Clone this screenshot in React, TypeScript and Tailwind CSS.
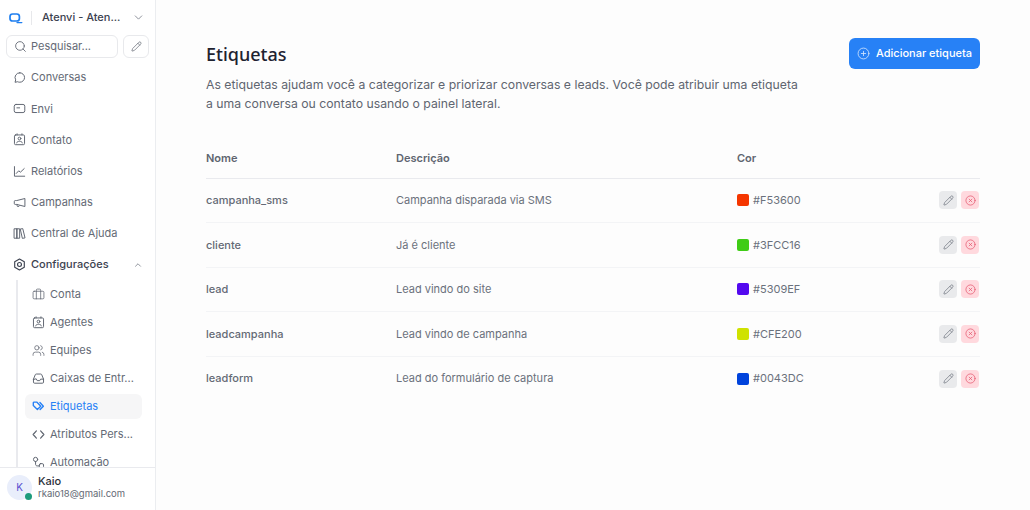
import {
  Briefcase,
  ChevronDown,
  ChevronUp,
  CircleX,
  Pencil,
  PlusCircle,
  Search,
  Users,
} from "lucide-react";
import type { ReactNode } from "react";

// outline icons drawn on a 16 box, same stroke for all of them
function Glyph({ children, size = 13, className = "", width = 1.2 }: { children: ReactNode; size?: number; className?: string; width?: number }) {
  return (
    <svg width={size} height={size} viewBox="0 0 16 16" fill="none" stroke="currentColor" strokeWidth={width} strokeLinecap="round" strokeLinejoin="round" className={`shrink-0 ${className}`}>
      {children}
    </svg>
  );
}

const ChatIcon = ({ className }: { className?: string }) => (
  <Glyph className={className}>
    <path d="M8.4 2.2a5.8 5.8 0 0 1 0 11.6c-1 0-1.9-.2-2.7-.6l-3.2.7.8-3a5.8 5.8 0 0 1 5.1-8.7Z" />
  </Glyph>
);
const EnviIcon = ({ className }: { className?: string }) => (
  <Glyph className={className}>
    <rect x="1.5" y="3" width="13" height="10" rx="2.2" />
    <path d="M4.8 7.2h3.4" />
  </Glyph>
);
const ContactIcon = ({ className }: { className?: string }) => (
  <Glyph className={className}>
    <rect x="1.800" y="2.400" width="12.400" height="12" rx="1.400" />
    <path d="M5 1v1.400M11 1v1.400" />
    <circle cx="8" cy="6.800" r="1.700" />
    <path d="M4.400 12.200c.5-1.500 1.900-2 3.600-2s3.100.5 3.600 2" />
  </Glyph>
);
const ChartIcon = ({ className }: { className?: string }) => (
  <Glyph className={className}>
    <path d="M1.800 2v11.800h12.600" />
    <path d="M4 10.400l3-3.200 2.200 1.600 4.600-4.400" />
  </Glyph>
);
const MegaphoneIcon = ({ className }: { className?: string }) => (
  <Glyph className={className}>
    <path d="M14.200 3.200 4.600 5.600H2.800a1.200 1.200 0 0 0-1.200 1.200v2.400a1.200 1.200 0 0 0 1.200 1.200h1.800l9.600 2.400Z" />
    <path d="M5 10.600v1.200a1.400 1.400 0 0 0 2.700.4" />
  </Glyph>
);
const LibraryIcon = ({ className }: { className?: string }) => (
  <Glyph className={className}>
    <rect x="1.800" y="2.200" width="3.200" height="11.600" />
    <rect x="5" y="2.200" width="3.200" height="11.600" />
    <path d="m9.400 2.400 2.600-.4 2.800 11.400-2.800.5Z" />
  </Glyph>
);
const GearIcon = ({ className }: { className?: string }) => (
  <Glyph className={className} width={1.4}>
    <path d="M8 1.200 13.900 4.600v6.800L8 14.800l-5.900-3.400V4.600Z" />
    <circle cx="8" cy="8" r="2.400" />
  </Glyph>
);
const AccountIcon = ({ className }: { className?: string }) => <Briefcase size={13} strokeWidth={1.4} className={className} />;
const TeamIcon = ({ className }: { className?: string }) => <Users size={13} strokeWidth={1.4} className={className} />;
const InboxIcon = ({ className }: { className?: string }) => (
  <Glyph className={className}>
    <path d="M1.800 8.800v3.600a1.400 1.400 0 0 0 1.400 1.400h9.600a1.400 1.400 0 0 0 1.400-1.400V8.800" />
    <path d="M1.800 8.800 4 3.400a1.400 1.400 0 0 1 1.300-.9h5.400a1.400 1.400 0 0 1 1.300.9l2.200 5.400h-3.600l-1 1.800H6.400l-1-1.800Z" />
  </Glyph>
);
const TagsIcon = ({ className }: { className?: string }) => (
  <Glyph className={className} width={1.700}>
    <path d="M1.600 3.600v3.200l5 5 4.200-4.200-5-5H2.600a1 1 0 0 0-1 1Z" />
    <path d="m9.800 3.200 4.200 4.400-4 4.200" />
  </Glyph>
);
const CodeIcon = ({ className }: { className?: string }) => (
  <Glyph className={className} width={1.500}>
    <path d="M5.400 3.600 1.400 8l4 4.400M10.600 3.600l4 4.400-4 4.400" />
  </Glyph>
);
const AutomationIcon = ({ className }: { className?: string }) => (
  <Glyph className={className}>
    <circle cx="4.400" cy="4.200" r="2.600" />
    <rect x="9" y="9.400" width="5.200" height="5" rx="1.600" />
    <path d="M4.400 6.800v3.400c0 1.300.9 2 2 2H9" />
  </Glyph>
);

const mainItems = [
  { label: "Conversas", icon: ChatIcon },
  { label: "Envi", icon: EnviIcon },
  { label: "Contato", icon: ContactIcon },
  { label: "Relatórios", icon: ChartIcon },
  { label: "Campanhas", icon: MegaphoneIcon },
  { label: "Central de Ajuda", icon: LibraryIcon },
];

const subItems = [
  { label: "Conta", icon: AccountIcon },
  { label: "Agentes", icon: ContactIcon },
  { label: "Equipes", icon: TeamIcon },
  { label: "Caixas de Entr...", icon: InboxIcon },
  { label: "Etiquetas", icon: TagsIcon, active: true },
  { label: "Atributos Pers...", icon: CodeIcon },
  { label: "Automação", icon: AutomationIcon },
];

const labels = [
  { name: "campanha_sms", description: "Campanha disparada via SMS", color: "#F53600", swatch: "bg-[#F53600]" },
  { name: "cliente", description: "Já é cliente", color: "#3FCC16", swatch: "bg-[#3FCC16]" },
  { name: "lead", description: "Lead vindo do site", color: "#5309EF", swatch: "bg-[#5309EF]" },
  { name: "leadcampanha", description: "Lead vindo de campanha", color: "#CFE200", swatch: "bg-[#CFE200]" },
  { name: "leadform", description: "Lead do formulário de captura", color: "#0043DC", swatch: "bg-[#0043DC]" },
];

function Logo() {
  return (
    <svg width="14" height="14" viewBox="0 0 14 14" fill="none" className="shrink-0">
      <rect x="1" y="3" width="9.400" height="7" rx="2.600" stroke="#1f7ff0" strokeWidth="1.700" />
      <path d="M8 11.600h4.800" stroke="#1f7ff0" strokeWidth="1.400" strokeLinecap="round" />
    </svg>
  );
}

function Sidebar() {
  return (
    <aside className="flex h-[510px] w-[156px] shrink-0 flex-col border-r border-[#ebedf0] bg-white">
      <div className="flex h-[35px] shrink-0 items-center pl-[9px] pr-[10px]">
        <Logo />
        <span className="ml-[8px] h-[14px] w-px bg-[#e7e8eb]" />
        <span className="ml-[10px] flex-1 text-[11px] font-medium text-[#3c4250]">Atenvi - Aten...</span>
        <ChevronDown size={13} className="text-[#7d828c]" strokeWidth={1.6} />
      </div>
      <div className="flex shrink-0 gap-[5px] pl-[6px] pr-[6px]">
        <div className="flex h-[23px] w-[112px] items-center gap-[4px] rounded-md border border-[#e8e9ec] pl-[7px]">
          <Search size={13} className="text-[#5f6570]" strokeWidth={1.6} />
          <span className="text-[11px] text-[#646a75]">Pesquisar...</span>
        </div>
        <div className="flex h-[23px] w-[26px] items-center justify-center rounded-md border border-[#e8e9ec]">
          <Pencil size={11} className="text-[#5f6570]" strokeWidth={1.5} />
        </div>
      </div>
      <nav className="mt-[4px] min-h-0 flex-1 overflow-hidden">
        {mainItems.map((item) => (
          <div key={item.label} className="flex h-[31.2px] items-center gap-[5px] pl-[13px]">
            <item.icon className="text-[#5f6570]" />
            <span className="text-[11px] text-[#646a75]">{item.label}</span>
          </div>
        ))}
        <div className="flex h-[31.2px] items-center gap-[5px] pl-[13px] pr-[12px]">
          <GearIcon className="text-[#3c4250]" />
          <span className="flex-1 text-[11px] font-medium text-[#3c4250]">Configurações</span>
          <ChevronUp size={10} className="text-[#7d828c]" strokeWidth={2} />
        </div>
        <div className="ml-[16px] border-l-2 border-[#e9eaee] pl-[7px] pr-[13px]">
          {subItems.map((item) => (
            <div key={item.label} className="flex h-[28px] items-center">
              <div className={`flex h-[25px] w-full items-center gap-[5px] rounded-md pl-[7px] ${item.active ? "bg-[#f6f6f7]" : ""}`}>
                <item.icon className={item.active ? "text-[#2781f6]" : "text-[#5f6570]"} />
                <span className={`whitespace-nowrap text-[11px] ${item.active ? "text-[#2781f6]" : "text-[#646a75]"}`}>{item.label}</span>
              </div>
            </div>
          ))}
        </div>
      </nav>
      <div className="flex h-[43px] shrink-0 items-start gap-[6px] border-t border-[#e9eaee] pl-[7px] pt-[7px]">
        <div className="relative flex h-[25px] w-[25px] items-center justify-center rounded-full bg-[#e9eefb] text-[10px] text-[#5a4fd0]">
          K
          <span className="absolute bottom-0 right-0 h-[7px] w-[7px] rounded-full bg-[#1c9b7c]" />
        </div>
        <div className="flex flex-col">
          <span className="text-[11px] font-medium leading-[13px] text-[#2c303a]">Kaio</span>
          <span className="text-[9.5px] leading-[12px] text-[#646a75]">rkaio18@gmail.com</span>
        </div>
      </div>
    </aside>
  );
}

export default function App() {
  return (
    <div className="flex h-[510px] w-[1030px] overflow-hidden bg-white font-['Inter',sans-serif]">
      <Sidebar />
      <main className="flex-1 bg-[#fdfdfd] pl-[50px] pr-[50px] pt-[38px]">
        <div className="flex items-start justify-between">
          <div className="w-[600px]">
            <h1 className="font-['Noto_Sans',sans-serif] text-[18px] font-medium leading-[32px] text-[#1e2230]">Etiquetas</h1>
            <p className="mt-[5px] text-[12.25px] leading-[19px] text-[#5f6570]">
              As etiquetas ajudam você a categorizar e priorizar conversas e leads. Você pode atribuir uma etiqueta a uma conversa ou contato usando o painel lateral.
            </p>
          </div>
          <button className="flex h-[31px] w-[131px] items-center justify-center gap-[6px] rounded-md bg-[#2781f6] text-[11px] font-medium text-white">
            <PlusCircle size={13} strokeWidth={1.5} className="text-[#d5e6fd]" />
            Adicionar etiqueta
          </button>
        </div>
        <table className="mt-[25px] w-full table-fixed border-collapse text-left text-[11px]">
          <thead>
            <tr className="h-[40px] border-b border-[#e9eaee]">
              <th className="w-[190px] font-semibold text-[#5f6570]">Nome</th>
              <th className="w-[341px] font-semibold text-[#5f6570]">Descrição</th>
              <th className="font-semibold text-[#5f6570]">Cor</th>
              <th className="w-[60px]" />
            </tr>
          </thead>
          <tbody>
            {labels.map((label, i) => (
              <tr key={label.name} className={`h-[44.5px] ${i < labels.length - 1 ? "border-b border-[#f3f4f6]" : ""}`}>
                <td className="font-medium text-[#646a75]">{label.name}</td>
                <td className="text-[#6b717c]">{label.description}</td>
                <td>
                  <div className="flex items-center gap-[4px] text-[#6b717c]">
                    <span className={`h-[12px] w-[12px] rounded-[2px] ${label.swatch}`} />
                    #{label.color.slice(1)}
                  </div>
                </td>
                <td>
                  <div className="flex justify-end gap-[4px] pr-px">
                    <button className="flex h-[18px] w-[18px] items-center justify-center rounded-[4px] bg-[#e9eaec]">
                      <Pencil size={11} strokeWidth={1.8} className="text-[#7d828c]" />
                    </button>
                    <button className="flex h-[18px] w-[18px] items-center justify-center rounded-[4px] bg-[#ffd9de]">
                      <CircleX size={11} strokeWidth={1.6} className="text-[#e5566d]" />
                    </button>
                  </div>
                </td>
              </tr>
            ))}
          </tbody>
        </table>
      </main>
    </div>
  );
}
